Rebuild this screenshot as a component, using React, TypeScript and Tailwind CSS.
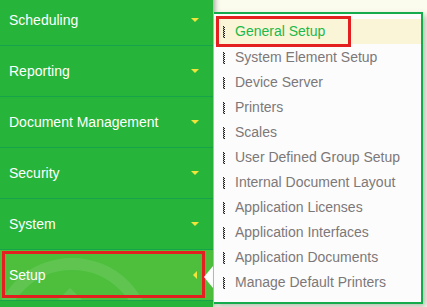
import React from "react";

const sideItems = ["Scheduling", "Reporting", "Document Management", "Security", "System"];

const setupItems = [
  "General Setup",
  "System Element Setup",
  "Device Server",
  "Printers",
  "Scales",
  "User Defined Group Setup",
  "Internal Document Layout",
  "Application Licenses",
  "Application Interfaces",
  "Application Documents",
  "Manage Default Printers",
];

const Grip: React.FC = () => (
  <svg width="2" height="12" viewBox="0 0 2 12" className="shrink-0">
    {[0, 2, 4, 6, 8, 10].map((y) => (
      <rect key={`a${y}`} x="0" y={y} width="1" height="1" fill="#1f1f1f" />
    ))}
    {[1, 3, 5, 7, 9, 11].map((y) => (
      <rect key={`b${y}`} x="1" y={y} width="1" height="1" fill="#1f1f1f" />
    ))}
    {[1, 3, 5, 7, 9, 11].map((y) => (
      <rect key={`c${y}`} x="0" y={y} width="1" height="1" fill="#9a9a9a" />
    ))}
  </svg>
);

const DownCaret: React.FC = () => (
  <span className="w-0 h-0 border-x-[4px] border-x-transparent border-t-[4px] border-t-[#f3e43c]" />
);

const App: React.FC = () => {
  return (
    <div
      className="relative w-[427px] h-[307px] overflow-hidden bg-[#fbfbee] flex"
      style={{ fontFamily: '"Liberation Sans", Arial, sans-serif' }}
    >
      <div className="relative z-10 w-[213px] shrink-0 bg-[#27b43a] shadow-[2px_0_5px_rgba(0,0,0,0.35)] flex flex-col -mt-[5px]">
        {sideItems.map((label) => (
          <div
            key={label}
            className="h-[51px] shrink-0 border-b border-[#16a44a] flex items-center justify-between pl-[9px] pr-[14px] text-white text-[14px]"
          >
            <span>{label}</span>
            <DownCaret />
          </div>
        ))}
        <div className="relative h-[51px] shrink-0 border-b border-[#16a44a] bg-[#4dbf3c] overflow-hidden flex items-center justify-between pl-[9px] pr-[16px] text-white text-[14px]">
          <div className="absolute left-[-8px] top-[8px] w-[160px] h-[160px] rounded-full border-[12px] border-white/10" />
          <div className="absolute left-[58px] top-[38px] w-0 h-0 border-x-[12px] border-x-transparent border-b-[12px] border-b-white/10" />
          <span className="relative">Setup</span>
          <span className="relative w-0 h-0 border-y-[4px] border-y-transparent border-r-[4px] border-r-[#f3e43c]" />
          <div className="absolute left-[2px] top-[1px] w-[203px] h-[47px] border-[3px] border-[#e3201f]" />
          <div className="absolute right-0 top-[16px] w-0 h-0 border-y-[11px] border-y-transparent border-r-[9px] border-r-white" />
        </div>
        <div className="h-[51px] shrink-0 border-b border-[#16a44a]" />
      </div>

      <div className="absolute z-20 left-[214px] top-[12px] w-[209px] h-[292px] bg-[#fcfcfc] border-t-2 border-r-2 border-b-2 border-[#14ab4c] shadow-[3px_3px_6px_rgba(0,0,0,0.25)] pt-[5px]">
        <ul className="flex flex-col">
          {setupItems.map((item, i) => (
            <li
              key={item}
              className={`h-[25px] flex items-center gap-[10px] pl-[9px] text-[14px] ${
                i === 0 ? "bg-[#faf5d6] text-[#1db84c] mb-[1px]" : "text-[#7c7879]"
              }`}
            >
              <Grip />
              <span>{item}</span>
            </li>
          ))}
        </ul>
        <div className="absolute left-[2px] top-[2px] w-[135px] h-[31px] border-[3px] border-[#e3201f]" />
      </div>
    </div>
  );
};

export default App;
